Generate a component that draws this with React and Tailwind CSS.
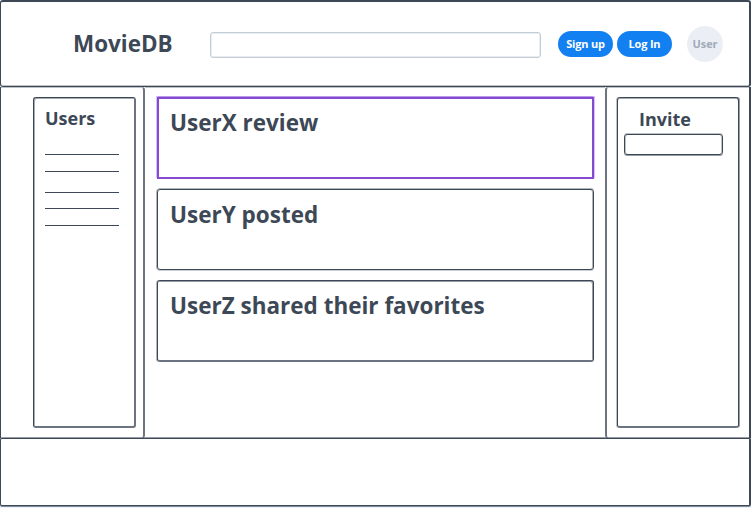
const posts = [
  {
    title: "UserX review",
    frame:
      "h-[82px] w-[437px] border-2 border-[#8549d2] pl-[10.5px] pt-[7px] shadow-[-1px_-1px_0_#8549d255,1px_-1px_0_#8549d255]",
  },
  {
    title: "UserY posted",
    frame:
      "mt-[10px] h-[81px] w-[437px] rounded-[3px] border border-[#3d4856] pl-[11.5px] pt-2 shadow-[inset_-1px_0_0_#3d485666,0_-1px_0_#3d485666,-1px_0_0_#3d485666,0_1px_0_#3d485644]",
  },
  {
    title: "UserZ shared their favorites",
    frame:
      "mt-[10px] h-[82px] w-[437px] rounded-[3px] border border-b-2 border-[#3d4856] border-b-[#6b7480] pl-[11.5px] pt-2 shadow-[inset_-1px_1px_0_#3d485688,-1px_0_0_#3d485666]",
  },
];

const lineGaps = ["mt-6", "mt-4", "mt-5", "mt-[15px]", "mt-4"];

export default function App() {
  return (
    <div className="flex h-[508px] w-[751px] flex-col overflow-hidden bg-[#edf2fa] font-['Open_Sans',sans-serif] text-[#3d4856]">
      <header className="flex h-[87px] shrink-0 items-start rounded-[3px] border-b border-l border-r-2 border-t-2 border-[#3d4856] bg-white shadow-[inset_0_-1px_0_#3d485655]">
        <h1 className="ml-[72px] mt-[25px] w-[137px] text-[24px] font-bold leading-8">
          <span className="inline-block origin-left scale-x-[0.935]">MovieDB</span>
        </h1>
        <input className="mt-[30px] h-[26px] w-[331px] rounded-[3px] border border-[#c3cdd8] shadow-[inset_0_0_0_1px_#c8d1dc66] outline-none" />
        <button className="ml-[17px] mt-[29px] h-[26px] w-[55px] whitespace-nowrap rounded-full bg-[#1380f2] text-[11px] font-bold tracking-[-0.2px] text-white">Sign up</button>
        <button className="ml-1 mt-[29px] h-[26px] w-[55px] whitespace-nowrap rounded-full bg-[#1380f2] text-[11px] font-bold tracking-[-0.2px] text-white">Log In</button>
        <div className="ml-[15px] mt-6 flex size-9 items-center justify-center rounded-full bg-[#ebeff5] text-[11px] font-bold tracking-[-0.1px] text-[#a0aab8]">User</div>
      </header>
      <main className="flex h-[351px] shrink-0 border-l border-r-2 border-[#3d4856] bg-white">
        <aside className="w-[144px] rounded-r-[3px] border-r-2 border-[#6b7480] pl-8 pt-[10px] shadow-[inset_0_1px_0_#3d485655]">
          <section className="h-[331px] w-[103px] rounded-[3px] border border-b-2 border-r-2 border-[#3d4856] border-b-[#6b7480] border-r-[#6b7480] pl-[11px] pt-2 shadow-[inset_1px_1px_0_#3d485677]">
            <h2 className="text-[18px] font-bold leading-6">Users</h2>
            {lineGaps.map((gap, i) => (
              <div key={i} className={`h-px w-[74px] bg-[#3d4856] ${gap}`} />
            ))}
          </section>
        </aside>
        <div className="flex w-[460px] flex-col pl-3 pt-[10px] shadow-[inset_0_1px_0_#3d485655]">
          {posts.map(({ title, frame }) => (
            <article key={title} className={frame}>
              <h2 className="w-fit origin-left scale-x-[0.937] whitespace-nowrap text-[24px] font-bold leading-8">{title}</h2>
            </article>
          ))}
        </div>
        <aside className="w-[144px] rounded-l-[3px] border-l-2 border-[#6b7480] pl-[10px] pt-[10px] shadow-[inset_0_1px_0_#3d485655]">
          <section className="h-[331px] w-[122px] rounded-[3px] border border-b-2 border-[#3d4856] border-b-[#6b7480] pl-[6px] pt-[9px] shadow-[inset_0_1px_0_#3d485677,-1px_0_0_#3d485655,1px_0_0_#3d485688]">
            <h2 className="pl-[15px] text-[18px] font-bold leading-6">Invite</h2>
            <input className="mt-[3px] block h-[21px] w-[99px] rounded-[3px] border border-[#3d4856] shadow-[inset_1px_0_0_#3d485655,inset_-1px_0_0_#3d485655,0_-1px_0_#3d485655,0_1px_0_#3d485688] outline-none" />
          </section>
        </aside>
      </main>
      <footer className="h-[68px] shrink-0 rounded-[2px] border-b border-l border-r-2 border-t border-[#3d4856] bg-white shadow-[0_-1px_0_#3d485688,0_1px_0_#3d485699]" />
    </div>
  );
}
